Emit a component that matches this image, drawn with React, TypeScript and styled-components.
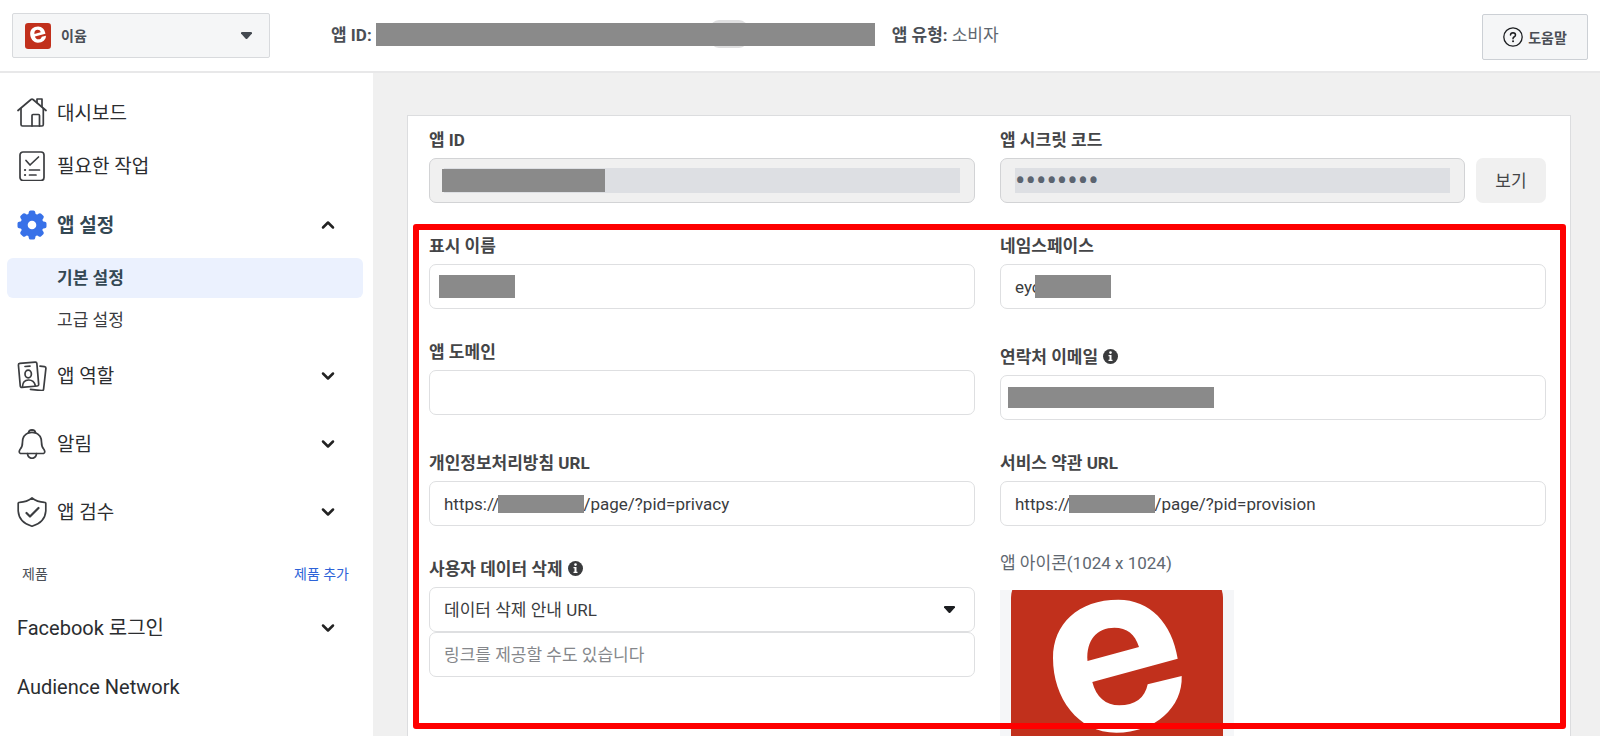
import React from 'react';
import styled, { createGlobalStyle } from 'styled-components';

const font = 'Roboto, "Noto Sans CJK KR", sans-serif';

const GlobalStyle = createGlobalStyle`
  *, *::before, *::after { box-sizing: border-box; }
  body { margin: 0; font-family: ${font}; color: #2b2d30; background: #f0f0f0; }
  button, input, select { font-family: inherit; color: inherit; margin: 0; }
  svg { display: block; flex: none; }
`;

const Page = styled.div`
  height: 100vh;
  display: flex;
  flex-direction: column;
  overflow: hidden;
`;

/* ---------- header ---------- */

const Header = styled.header`
  flex: none;
  height: 73px;
  display: flex;
  align-items: flex-start;
  padding: 13px 12px 0;
  background: #fff;
  border-bottom: 2px solid #e8e8e9;
`;

const AppPicker = styled.div`
  width: 258px;
  height: 45px;
  display: flex;
  align-items: center;
  padding: 0 16px 0 12px;
  background: #f5f6f7;
  border: 1px solid #d8dadd;
  border-radius: 2px;
`;

const PickerSelect = styled.select`
  appearance: none;
  flex: 1;
  min-width: 0;
  padding: 0 0 0 10px;
  border: 0;
  background: none;
  font-size: 14px;
  font-weight: 700;
  color: #4b4f56;
`;

const AppFacts = styled.div`
  flex: 1;
  height: 42px;
  display: flex;
  align-items: center;
  margin-left: 61px;
  gap: 4px;
  font-size: 17px;
  color: #606770;
  white-space: nowrap;
`;

const FactName = styled.span`
  padding-bottom: 2px;
  font-weight: 700;
  color: #4b4f56;
`;

const FactValue = styled.span`
  padding-bottom: 2px;
`;

const IdSlot = styled.span`
  position: relative;
  width: 499px;
  height: 28px;
  display: flex;
  align-items: center;
  margin-right: 13px;
`;

const Pill = styled.span`
  position: absolute;
  left: 334px;
  width: 38px;
  height: 28px;
  border-radius: 9px;
  background: #dfdfe0;
`;

const Redaction = styled.span`
  position: relative;
  width: 100%;
  height: 23px;
  background: #8a8a8a;
`;

const HelpButton = styled.button`
  width: 106px;
  height: 46px;
  margin-top: 1px;
  display: flex;
  align-items: center;
  justify-content: center;
  gap: 5px;
  padding: 0 0 1px;
  background: #f5f6f7;
  border: 1px solid #ccd0d5;
  border-radius: 2px;
  font-size: 14px;
  font-weight: 700;
  color: #4b4f56;
`;

/* ---------- sidebar ---------- */

const Body = styled.div`
  flex: 1;
  min-height: 0;
  display: flex;
`;

const Sidebar = styled.nav`
  flex: none;
  width: 373px;
  padding-top: 13px;
  background: #fff;
`;

const NavItem = styled.a<{ $h: number; $active?: boolean; $latin?: boolean }>`
  height: ${(p) => p.$h}px;
  display: flex;
  align-items: center;
  gap: 10px;
  padding: 0 38px 0 17px;
  font-size: ${(p) => (p.$latin ? 20 : 19)}px;
  font-weight: ${(p) => (p.$active ? 700 : 400)};
  color: ${(p) => (p.$active ? '#344854' : '#2b2d30')};
  text-decoration: none;
`;

const NavText = styled.span`
  flex: 1;
  padding-bottom: 3px;
`;

const SubItem = styled.a<{ $active?: boolean }>`
  height: 40px;
  margin: 0 10px 2px 7px;
  padding: 0 0 3px 50px;
  display: flex;
  align-items: center;
  border-radius: 6px;
  font-size: 17px;
  font-weight: ${(p) => (p.$active ? 700 : 400)};
  color: ${(p) => (p.$active ? '#344854' : '#3a3c40')};
  background: ${(p) => (p.$active ? '#ebf1fe' : 'transparent')};
  text-decoration: none;
`;

const ProductHeader = styled.div`
  height: 52px;
  display: flex;
  align-items: center;
  justify-content: space-between;
  padding: 2px 24px 0 22px;
  font-size: 14px;
  color: #4b4f56;
`;

const AddLink = styled.a`
  color: #2d63d8;
  text-decoration: none;
`;

/* ---------- settings card ---------- */

const Main = styled.main`
  flex: 1;
  min-width: 0;
  padding: 42px 29px 0 34px;
`;

const Card = styled.section`
  position: relative;
  min-height: 900px;
  padding: 13px 24px 0 21px;
  background: #fff;
  border: 1px solid #dcdddf;
`;

const Grid = styled.form`
  display: grid;
  grid-template-columns: 1fr 1fr;
  column-gap: 25px;
`;

const Field = styled.div<{ $offset?: boolean }>`
  padding: ${(p) => (p.$offset ? 5 : 0)}px 0 32px;
`;

const Label = styled.label`
  height: 20px;
  margin-bottom: 9px;
  padding-bottom: 2px;
  display: flex;
  align-items: center;
  gap: 5px;
  font-size: 17px;
  font-weight: 700;
  color: #444547;

  svg { margin-top: 2px; }
`;

const ControlRow = styled.div`
  display: flex;
  gap: 11px;
`;

const Control = styled.div<{ $disabled?: boolean }>`
  position: relative;
  flex: 1;
  min-width: 0;
  height: 45px;
  display: flex;
  align-items: center;
  padding: 0 ${(p) => (p.$disabled ? 14 : 18)}px 0 14px;
  border: 1px solid ${(p) => (p.$disabled ? '#d2d3d5' : '#dedfe1')};
  border-radius: 7px;
  background: ${(p) => (p.$disabled ? '#f0f0f0' : '#fff')};
`;

const TextInput = styled.input`
  flex: 1;
  min-width: 0;
  width: 100%;
  height: 25px;
  padding: 0;
  border: 0;
  outline: 0;
  background: transparent;
  font-size: 17px;
  color: #3a3c40;
  &:disabled { background: #dddfe3; color: #5b6470; }
  &[type='password'] { font-size: 31px; }
  &::placeholder { color: #85878b; opacity: 1; }
`;

const Choice = styled.select`
  appearance: none;
  flex: 1;
  min-width: 0;
  padding: 0;
  border: 0;
  background: none;
  font-size: 17px;
  color: #3a3c40;
`;

const Mask = styled.span<{ $x: number; $w: number; $h: number }>`
  position: absolute;
  left: ${(p) => p.$x}px;
  width: ${(p) => p.$w}px;
  height: ${(p) => p.$h}px;
  background: #8a8a8a;
`;

const ShowButton = styled.button`
  width: 70px;
  height: 45px;
  padding: 0 0 3px;
  border: 0;
  border-radius: 7px;
  background: #f0f0f0;
  font-size: 17px;
  color: #444547;
`;

const IconTitle = styled.p`
  margin: -5px 0 17px;
  font-size: 17px;
  line-height: 20px;
  color: #606770;
`;

const AppIconBox = styled.div`
  width: 234px;
  height: 234px;
  background: #f5f6f8;
`;

const Highlight = styled.div`
  position: absolute;
  top: 108px;
  left: 5px;
  right: 4px;
  height: 505px;
  border: 6px solid #fe0000;
  border-radius: 3px;
  pointer-events: none;
`;

/* ---------- drawings ---------- */

const LogoShape = () => (
  <>
    <rect x="11" y="-18" width="212" height="212" rx="26" fill="#c1301c" />
    <path
      fill="#fff"
      fillRule="evenodd"
      d="M177.700 68.700C172 33 150 9.700 118.400 9.700C78 9.700 53 34 53 68C53 108 78 142.700 116.400 142.700C155 142.700 183 117 181.700 86L147.700 94.300C145 108 135 115.300 119.200 115.300C106 115.300 96 107 92.300 92ZM87.500 71L139 57C135 44 127 37.700 114.400 37.700C97 37.700 86 50 87.500 71Z"
    />
  </>
);

const SmallLogo = () => (
  <svg width="26" height="26" viewBox="11 -18 212 212" aria-hidden="true">
    <LogoShape />
  </svg>
);

const LargeLogo = () => (
  <svg width="234" height="234" viewBox="0 0 234 234" role="img" aria-label="이윰">
    <LogoShape />
  </svg>
);

const Caret = ({ color = '#1c1e21' }: { color?: string }) => (
  <svg width="13" height="9" viewBox="0 0 13 9" aria-hidden="true">
    <path d="M2 1h9q1.500 0 1 1.500L7.500 7.500q-1 1-2 0L1 2.500Q.5 1 2 1z" fill={color} />
  </svg>
);

const Chevron = ({ up }: { up?: boolean }) => (
  <svg width="14" height="10" viewBox="0 0 14 10" fill="none" stroke="#222" strokeWidth="2.500" strokeLinecap="round" strokeLinejoin="round" aria-hidden="true">
    <path d={up ? 'M2 7.500L7 2.500L12 7.500' : 'M2 2.500L7 7.500L12 2.500'} />
  </svg>
);

const Line = ({ children }: { children: React.ReactNode }) => (
  <svg width="30" height="30" viewBox="0 0 30 30" fill="none" stroke="#3b3d40" strokeWidth="1.700" strokeLinecap="round" strokeLinejoin="round" aria-hidden="true">
    {children}
  </svg>
);

const HomeIcon = () => (
  <Line>
    <path d="M1 12.500L14 1.500Q15 .9 16 1.500L29 12.500" />
    <path d="M4 10.500V26.500Q4 28 5.500 28H25Q26.300 28 26.300 26.500V10.500" />
    <path d="M20 4.500V1H25V8.500M15 28V17.500Q15 16.500 16 16.500H21.500Q22.500 16.500 22.500 17.500V28" />
  </Line>
);

const TaskIcon = () => (
  <Line>
    <rect x="3" y="1" width="24" height="28.500" rx="3" />
    <path d="M9 9.500L13 14L21.500 6M12.500 19H22.500M12.500 24H19" />
    <path d="M8 19h.1M8 24h.1" strokeWidth="2.200" />
  </Line>
);

const GearIcon = () => (
  <svg width="30" height="30" viewBox="0 0 30 30" aria-hidden="true">
    <g fill="#3871e8">
      {[0, 45, 90, 135].map((a) => (
        <path key={a} transform={`rotate(${a} 15 15)`} d="M13.500 .5h3q1.500 0 1.700 1.600L19 6v18l-.8 3.900q-.2 1.600-1.700 1.600h-3q-1.500 0-1.700-1.600L11 24V6l.8-3.900Q12 .5 13.500 .5z" />
      ))}
      <circle cx="15" cy="15" r="11.500" />
    </g>
    <circle cx="15" cy="15" r="4.300" fill="#fff" />
  </svg>
);

const RolesIcon = () => (
  <Line>
    <rect x="2.300" y="1.700" width="18.500" height="24" rx="1.500" transform="rotate(-5 11.500 13.700)" />
    <path d="M8 5.500L13 5.100" />
    <ellipse cx="11.200" cy="13" rx="3.200" ry="3.900" />
    <path d="M5.500 25.500Q5.700 19.300 11.500 19Q17 18.900 18.300 24.500" />
    <path d="M23 5.200L27.500 5.700Q29 5.900 28.900 7.300L26.600 28.200Q26.400 29.700 25 29.600L13.500 28.400" />
  </Line>
);

const BellIcon = () => (
  <Line>
    <path d="M12 3.500Q5.500 6 5.500 13Q5.500 18 3 20.500Q1.200 23.500 3.500 24.500H26.500Q28.800 23.500 27 20.500Q24.500 18 24.500 13Q24.500 6 18 3.500" />
    <path d="M11.500 4Q11.700 1 15 .9Q18.300 1 18.500 4Q15 2.700 11.500 4M10.500 24.700Q11 29.200 15 29.300Q19 29.200 19.500 24.700" />
  </Line>
);

const ShieldIcon = () => (
  <Line>
    <path d="M15 1Q10 5 2.500 5.300Q1 5.300 1.200 7V14Q2 25.500 15 29.200Q28 25.500 28.800 14V7Q29 5.300 27.500 5.300Q20 5 15 1Z" />
    <path d="M9.500 16L13 19.500L21.500 11" strokeWidth="2.200" />
  </Line>
);

const InfoIcon = () => (
  <svg width="15" height="15" viewBox="0 0 15 15" aria-hidden="true">
    <circle cx="7.500" cy="7.500" r="7.500" fill="#3a3b3d" />
    <circle cx="7.500" cy="3.600" r="1.300" fill="#fff" />
    <path d="M5.500 6h3v4.800h1V12h-4v-1.200h1V7.200h-1z" fill="#fff" />
  </svg>
);

const QuestionIcon = () => (
  <svg width="20" height="20" viewBox="0 0 20 20" fill="none" stroke="#1c1e21" strokeLinecap="round" aria-hidden="true">
    <circle cx="10" cy="10" r="9.200" strokeWidth="1.300" />
    <path d="M7.500 8Q7.600 5.800 10 5.700Q12.500 5.800 12.500 8Q12.500 9.200 11 10Q10 10.600 10 11.700" strokeWidth="1.500" />
    <path d="M10 14.200h.1" strokeWidth="1.900" />
  </svg>
);

const blank = (n: number) => '\u00a0'.repeat(n);

export default function App() {
  return (
    <Page>
      <GlobalStyle />
      <Header>
        <AppPicker>
          <SmallLogo />
          <PickerSelect aria-label="앱 선택">
            <option>이윰</option>
          </PickerSelect>
          <Caret color="#444950" />
        </AppPicker>
        <AppFacts>
          <FactName>앱 ID:</FactName>
          <IdSlot>
            <Pill />
            <Redaction />
          </IdSlot>
          <FactName>앱 유형:</FactName>
          <FactValue>소비자</FactValue>
        </AppFacts>
        <HelpButton type="button">
          <QuestionIcon />
          도움말
        </HelpButton>
      </Header>
      <Body>
        <Sidebar>
          <NavItem href="#dashboard" $h={53}><HomeIcon /><NavText>대시보드</NavText></NavItem>
          <NavItem href="#tasks" $h={53}><TaskIcon /><NavText>필요한 작업</NavText></NavItem>
          <NavItem href="#settings" $h={66} $active><GearIcon /><NavText>앱 설정</NavText><Chevron up /></NavItem>
          <SubItem href="#basic" $active>기본 설정</SubItem>
          <SubItem href="#advanced">고급 설정</SubItem>
          <NavItem href="#roles" $h={68}><RolesIcon /><NavText>앱 역할</NavText><Chevron /></NavItem>
          <NavItem href="#alerts" $h={68}><BellIcon /><NavText>알림</NavText><Chevron /></NavItem>
          <NavItem href="#review" $h={68}><ShieldIcon /><NavText>앱 검수</NavText><Chevron /></NavItem>
          <ProductHeader>
            <span>제품</span>
            <AddLink href="#add-product">제품 추가</AddLink>
          </ProductHeader>
          <NavItem href="#login" $h={60} $latin><NavText>Facebook 로그인</NavText><Chevron /></NavItem>
          <NavItem href="#audience" $h={60} $latin><NavText>Audience Network</NavText></NavItem>
        </Sidebar>
        <Main>
          <Card>
            <Grid>
              <Field>
                <Label htmlFor="app-id">앱 ID</Label>
                <Control $disabled>
                  <TextInput id="app-id" disabled />
                  <Mask $x={12} $w={163} $h={23} />
                </Control>
              </Field>
              <Field>
                <Label htmlFor="secret">앱 시크릿 코드</Label>
                <ControlRow>
                  <Control $disabled>
                    <TextInput id="secret" type="password" disabled defaultValue="00000000" />
                  </Control>
                  <ShowButton type="button">보기</ShowButton>
                </ControlRow>
              </Field>
              <Field>
                <Label htmlFor="display-name">표시 이름</Label>
                <Control>
                  <TextInput id="display-name" />
                  <Mask $x={9} $w={76} $h={23} />
                </Control>
              </Field>
              <Field>
                <Label htmlFor="namespace">네임스페이스</Label>
                <Control>
                  <TextInput id="namespace" defaultValue="eyo" />
                  <Mask $x={34} $w={76} $h={23} />
                </Control>
              </Field>
              <Field>
                <Label htmlFor="domain">앱 도메인</Label>
                <Control>
                  <TextInput id="domain" />
                </Control>
              </Field>
              <Field $offset>
                <Label htmlFor="email">연락처 이메일 <InfoIcon /></Label>
                <Control>
                  <TextInput id="email" />
                  <Mask $x={7} $w={206} $h={21} />
                </Control>
              </Field>
              <Field>
                <Label htmlFor="privacy">개인정보처리방침 URL</Label>
                <Control>
                  <TextInput id="privacy" defaultValue={`https://${blank(20)}/page/?pid=privacy`} />
                  <Mask $x={68} $w={86} $h={18} />
                </Control>
              </Field>
              <Field>
                <Label htmlFor="terms">서비스 약관 URL</Label>
                <Control>
                  <TextInput id="terms" defaultValue={`https://${blank(20)}/page/?pid=provision`} />
                  <Mask $x={68} $w={86} $h={18} />
                </Control>
              </Field>
              <Field>
                <Label htmlFor="deletion">사용자 데이터 삭제 <InfoIcon /></Label>
                <Control>
                  <Choice id="deletion">
                    <option>데이터 삭제 안내 URL</option>
                  </Choice>
                  <Caret />
                </Control>
                <Control>
                  <TextInput aria-label="데이터 삭제 안내 URL" placeholder="링크를 제공할 수도 있습니다" />
                </Control>
              </Field>
              <Field>
                <IconTitle>앱 아이콘(1024 x 1024)</IconTitle>
                <AppIconBox><LargeLogo /></AppIconBox>
              </Field>
            </Grid>
            <Highlight />
          </Card>
        </Main>
      </Body>
    </Page>
  );
}
